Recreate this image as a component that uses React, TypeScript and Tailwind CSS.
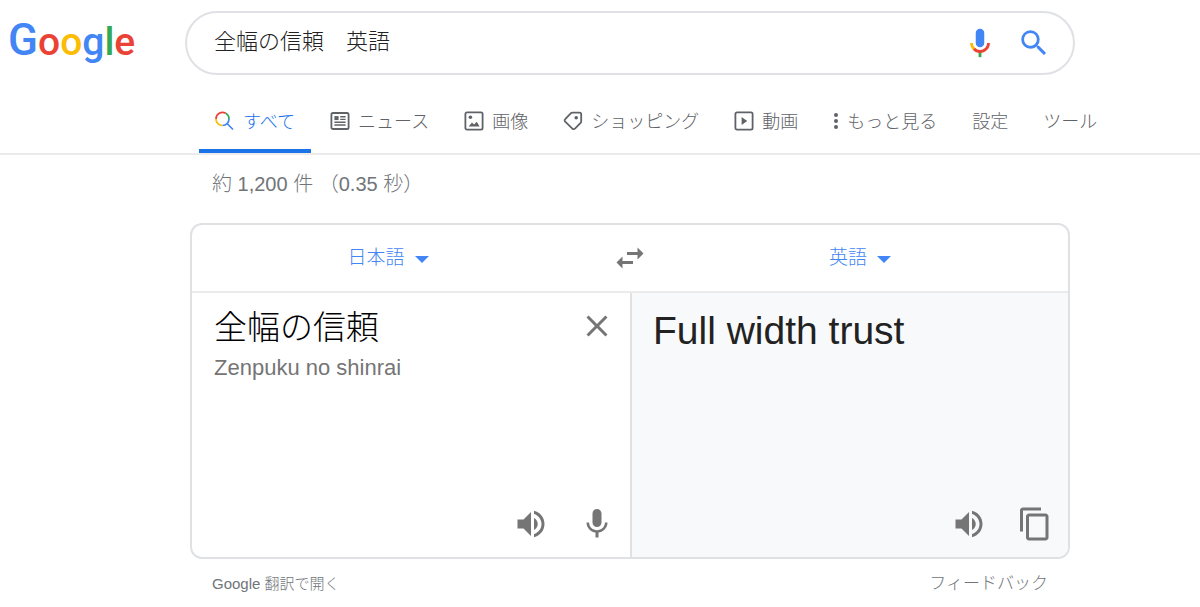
import { useState } from "react";
import type { ReactNode } from "react";

const logoLetters = [
  { char: "G", className: "text-[44px] text-[#4285f4]" },
  { char: "o", className: "text-[#ea4335]" },
  { char: "o", className: "text-[#fbbc05]" },
  { char: "g", className: "text-[#4285f4]" },
  { char: "l", className: "text-[#34a853]" },
  { char: "e", className: "text-[#ea4335]" },
];

const languages = ["日本語", "英語"];

const paths = {
  swap: "M6.99 11L3 15l3.99 4v-3H14v-2H6.99v-3zM21 9l-3.99-4v3H10v2h7.01v3L21 9z",
  close: "M19 6.41L17.59 5 12 10.59 6.41 5 5 6.41 10.59 12 5 17.59 6.41 19 12 13.41 17.59 19 19 17.59 13.41 12z",
  volume:
    "M3 9v6h4l5 5V4L7 9H3zm13.5 3c0-1.77-1.02-3.29-2.5-4.03v8.05c1.48-.73 2.5-2.25 2.5-4.02zM14 3.23v2.06c2.89.86 5 3.54 5 6.71s-2.11 5.85-5 6.71v2.06c4.01-.91 7-4.49 7-8.77s-2.99-7.86-7-8.77z",
  mic: "M12 14c1.66 0 2.99-1.34 2.99-3L15 5c0-1.66-1.34-3-3-3S9 3.34 9 5v6c0 1.66 1.34 3 3 3zm5.3-3c0 3-2.54 5.1-5.3 5.1S6.7 14 6.7 11H5c0 3.41 2.72 6.23 6 6.72V21h2v-3.28c3.28-.48 6-3.3 6-6.72h-1.7z",
  copy: "M16 1H4c-1.1 0-2 .9-2 2v14h2V3h12V1zm3 4H8c-1.1 0-2 .9-2 2v14c0 1.1.9 2 2 2h11c1.1 0 2-.9 2-2V7c0-1.1-.9-2-2-2zm0 16H8V7h11v14z",
  search:
    "M15.5 14h-.79l-.28-.27A6.471 6.471 0 0 0 16 9.5 6.5 6.5 0 1 0 9.5 16c1.61 0 3.09-.59 4.23-1.57l.27.28v.79l5 4.99L20.49 19l-4.99-5zm-6 0C7.01 14 5 11.99 5 9.5S7.01 5 9.5 5 14 7.01 14 9.5 11.99 14 9.5 14z",
};

function Icon({ d, className = "size-9" }: { d: string; className?: string }) {
  return (
    <svg viewBox="0 0 24 24" fill="currentColor" className={className} aria-hidden="true">
      <path d={d} />
    </svg>
  );
}

function IconButton({ label, d }: { label: string; d: string }) {
  return (
    <button type="button" aria-label={label} className="text-[#757575]">
      <Icon d={d} />
    </button>
  );
}

function VoiceIcon() {
  return (
    <svg viewBox="0 0 24 24" className="size-[34px]" aria-hidden="true">
      <path fill="#4285f4" d="M12 15c1.66 0 3-1.31 3-2.97V5.01C15 3.35 13.66 2 12 2S9 3.34 9 5.01v7.02C9 13.69 10.34 15 12 15z" />
      <path fill="#34a853" d="M11 18.08h2V22h-2z" />
      <path fill="#fbbc05" d="M7.05 16.87C5.78 15.54 5 14.04 5 12h2c0 1.45.56 2.42 1.47 3.38v.32l-1.15 1.18z" />
      <path fill="#ea4335" d="M12 16.93a4.97 5.25 0 0 1-3.54-1.55l-1.41 1.49C8.31 18.21 10.07 19 12 19c3.87 0 6.99-2.92 6.99-7H17c0 2.92-2.24 4.93-5 4.93z" />
    </svg>
  );
}

const tabs: { label: string; active?: boolean; icon?: ReactNode }[] = [
  {
    label: "すべて",
    active: true,
    icon: (
      <svg viewBox="0 0 20 20" className="size-5" fill="none" strokeWidth="1.7" aria-hidden="true">
        <path stroke="#ea4335" d="M1 8a6.5 6.5 0 0 1 9.7-5.7" />
        <path stroke="#34a853" d="M10.7 2.3A6.5 6.5 0 0 1 14 8" />
        <path stroke="#4285f4" d="M14 8a6.5 6.5 0 0 1-6.5 6.5M12 12.5l6 6" />
        <path stroke="#fbbc05" d="M7.5 14.5A6.5 6.5 0 0 1 1 8" />
      </svg>
    ),
  },
  {
    label: "ニュース",
    icon: (
      <svg viewBox="0 0 20 20" className="size-5" fill="none" stroke="currentColor" strokeWidth="1.8" aria-hidden="true">
        <rect x="1.4" y="2" width="17.2" height="16" rx="1.6" />
        <path d="M4.4 14h11.2M4.4 11.2h11.2M10.2 8.4h5.4M10.2 5.8h5.4" strokeWidth="1.4" />
        <path d="M4.4 5.1h4.2v4H4.4z" fill="currentColor" stroke="none" />
      </svg>
    ),
  },
  {
    label: "画像",
    icon: (
      <svg viewBox="0 0 20 20" className="size-5" fill="none" stroke="currentColor" strokeWidth="1.8" aria-hidden="true">
        <rect x="1.4" y="1.4" width="17.2" height="17.2" rx="1.6" />
        <circle cx="6.4" cy="6.2" r="1.8" fill="currentColor" stroke="none" />
        <path d="M4.6 15.4l3.4-3.8 2 2 2.8-2.8 2.8 4.6z" fill="currentColor" stroke="none" />
      </svg>
    ),
  },
  {
    label: "ショッピング",
    icon: (
      <svg viewBox="0 0 20 20" className="size-5" fill="none" stroke="currentColor" strokeWidth="1.8" strokeLinejoin="round" aria-hidden="true">
        <path d="M9.4 1.6h7.2a1.6 1.6 0 0 1 1.6 1.6v7.2a2 2 0 0 1-.6 1.4l-5.6 5.8a1.8 1.8 0 0 1-2.6 0l-7.2-6.9a1.8 1.8 0 0 1 0-2.6L8 2.2a2 2 0 0 1 1.4-.6z" />
        <circle cx="13.2" cy="6.8" r="1.8" fill="currentColor" stroke="none" />
      </svg>
    ),
  },
  {
    label: "動画",
    icon: (
      <svg viewBox="0 0 20 20" className="size-5" fill="none" stroke="currentColor" strokeWidth="1.8" aria-hidden="true">
        <rect x="1.4" y="1.4" width="17.2" height="17.2" rx="1.6" />
        <path d="M7.6 6v8l5.6-4z" fill="currentColor" stroke="none" />
      </svg>
    ),
  },
  {
    label: "もっと見る",
    icon: (
      <svg viewBox="0 0 6 20" className="h-5 w-[6px]" fill="currentColor" aria-hidden="true">
        <circle cx="3" cy="4" r="2" />
        <circle cx="3" cy="10" r="2" />
        <circle cx="3" cy="16" r="2" />
      </svg>
    ),
  },
  { label: "設定" },
  { label: "ツール" },
];

type LanguageSelectProps = {
  label: string;
  value: string;
  onChange: (value: string) => void;
};

function LanguageSelect({ label, value, onChange }: LanguageSelectProps) {
  return (
    <label className="flex items-center justify-center gap-[10px] text-[#4285f4]">
      <select
        aria-label={label}
        value={value}
        onChange={(e) => onChange(e.target.value)}
        className="appearance-none text-[19px] leading-7 [field-sizing:content]"
      >
        {languages.map((lang) => (
          <option key={lang}>{lang}</option>
        ))}
      </select>
      <svg viewBox="0 0 14 12" className="h-3 w-[14px]" fill="currentColor" aria-hidden="true">
        <path d="M0 4h14l-7 7z" />
      </svg>
    </label>
  );
}

export default function App() {
  const [query, setQuery] = useState("全幅の信頼　英語");
  const [source, setSource] = useState("全幅の信頼");
  const [from, setFrom] = useState("日本語");
  const [to, setTo] = useState("英語");

  const swap = () => {
    setFrom(to);
    setTo(from);
  };

  return (
    <div lang="ja" className="min-h-screen bg-white font-['Liberation_Sans','Noto_Sans_CJK_JP',sans-serif] font-light">
      <header className="border-b-2 border-[#ebebeb]">
        <div className="flex items-center pt-[11px]">
          <a href="#" className="w-[185px] shrink-0 pb-1 pl-2 font-['Roboto',sans-serif] text-[39px] leading-[56px] font-medium">
            {logoLetters.map((letter, i) => (
              <span key={i} className={letter.className}>
                {letter.char}
              </span>
            ))}
          </a>
          <form
            onSubmit={(e) => e.preventDefault()}
            className="flex h-16 max-w-[890px] flex-1 items-center gap-5 rounded-full border-2 border-[#dfe1e5] pr-[22px] pl-[27px]"
          >
            <input
              aria-label="検索"
              value={query}
              onChange={(e) => setQuery(e.target.value)}
              className="min-w-0 flex-1 pb-[2px] text-[22px] leading-8 text-[#222] outline-none"
            />
            <button type="button" aria-label="音声検索">
              <VoiceIcon />
            </button>
            <button type="submit" aria-label="検索する" className="text-[#4285f4]">
              <Icon d={paths.search} className="size-[34px]" />
            </button>
          </form>
        </div>

        <nav className="mt-[17px] flex gap-[3px] pl-[199px] font-['Noto_Sans_CJK_JP',sans-serif]">
          {tabs.map((tab) => (
            <a
              key={tab.label}
              href="#"
              className={
                tab.active
                  ? "flex h-[61px] items-center gap-2 border-b-4 border-[#1a73e8] px-4 text-[18px] whitespace-nowrap text-[#1a73e8]"
                  : "flex h-[61px] items-center gap-2 border-b-4 border-transparent px-4 text-[18px] whitespace-nowrap text-[#5f6368]"
              }
            >
              {tab.icon}
              {tab.label}
            </a>
          ))}
        </nav>
      </header>

      <main className="ml-[190px] max-w-[880px]">
        <p className="px-[22px] pt-[13px] text-[20px] leading-8 text-[#70757a]">約 1,200 件 （0.35 秒）</p>

        <section className="mt-[23px] overflow-hidden rounded-xl border-2 border-[#dfe1e5]">
          <div className="grid h-[68px] grid-cols-[1fr_auto_1fr] items-center border-b-2 border-[#ebebeb]">
            <div className="pr-7">
              <LanguageSelect label="翻訳元の言語" value={from} onChange={setFrom} />
            </div>
            <button type="button" aria-label="言語を入れ替える" onClick={swap} className="text-[#757575]">
              <Icon d={paths.swap} />
            </button>
            <div className="pl-1">
              <LanguageSelect label="翻訳先の言語" value={to} onChange={setTo} />
            </div>
          </div>

          <div className="grid min-h-[264px] grid-cols-2">
            <div className="flex flex-col justify-between">
              <div className="flex items-start pt-[15px] pr-[15px] pl-[22px]">
                <div className="min-w-0 flex-1">
                  <textarea
                    aria-label="原文"
                    rows={1}
                    value={source}
                    onChange={(e) => setSource(e.target.value)}
                    className="block h-10 w-full resize-none overflow-hidden text-[33px] leading-10 text-black outline-none"
                  />
                  <p className="mt-1 text-[22px] leading-8 text-[#757575]">Zenpuku no shinrai</p>
                </div>
                <button type="button" aria-label="テキストを消去" onClick={() => setSource("")} className="text-[#757575]">
                  <Icon d={paths.close} />
                </button>
              </div>
              <div className="flex justify-end gap-[30px] pr-[15px] pb-[15px]">
                <IconButton label="原文を聞く" d={paths.volume} />
                <IconButton label="音声入力" d={paths.mic} />
              </div>
            </div>

            <div className="flex flex-col justify-between border-l-2 border-[#dfe1e5] bg-[#f8f9fa]">
              <p className="px-[21px] pt-[14px] text-[39px] leading-[48px] text-[#222]">Full width trust</p>
              <div className="flex justify-end gap-[30px] pr-[15px] pb-[15px]">
                <IconButton label="訳文を聞く" d={paths.volume} />
                <IconButton label="訳文をコピー" d={paths.copy} />
              </div>
            </div>
          </div>
        </section>

        <footer className="flex justify-between px-[22px] pt-[13px] leading-6 text-[#70757a]">
          <a href="#" className="text-[15px]">
            Google 翻訳で開く
          </a>
          <a href="#" className="text-[17px]">
            フィードバック
          </a>
        </footer>
      </main>
    </div>
  );
}
